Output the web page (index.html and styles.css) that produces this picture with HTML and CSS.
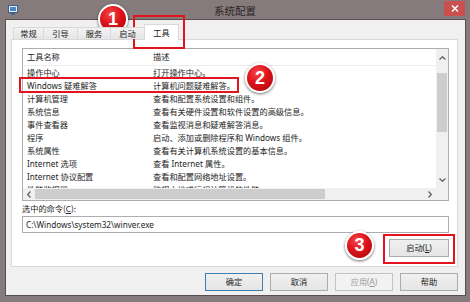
FILE: index.html
```html
<!DOCTYPE html>
<html>
<head>
<meta charset="utf-8">
<title>系统配置</title>
<link rel="stylesheet" href="styles.css">
</head>
<body>
<div class="window">
  <div class="titlebar">
    <svg class="appicon" width="10" height="10" viewBox="0 0 10 10">
      <rect x="0.5" y="0.5" width="9" height="7" fill="#e6eef6" stroke="#3d5f8f"/>
      <rect x="2" y="2" width="6" height="4" fill="#4f86c6"/>
      <rect x="3" y="8" width="4" height="1.6" fill="#3d5f8f"/>
    </svg>
    <div class="title">系统配置</div>
    <div class="close">
      <svg width="8" height="7" viewBox="0 0 8 7"><path d="M1 0.5 L7 6.5 M7 0.5 L1 6.5" stroke="#fff" stroke-width="1.5"/></svg>
    </div>
  </div>
  <div class="client">
    <div class="tabs">
      <div class="tab t1">常规</div>
      <div class="tab t2">引导</div>
      <div class="tab t3">服务</div>
      <div class="tab t4">启动</div>
      <div class="tab t5 active">工具</div>
    </div>
    <div class="panel">
      <div class="listview">
        <div class="lv-main">
          <div class="lv-header"><div class="c1">工具名称</div><div class="c2">描述</div></div>
          <div class="lv-row"><div class="c1">操作中心</div><div class="c2">打开操作中心。</div></div>
          <div class="lv-row"><div class="c1">Windows 疑难解答</div><div class="c2">计算机问题疑难解答。</div></div>
          <div class="lv-row"><div class="c1">计算机管理</div><div class="c2">查看和配置系统设置和组件。</div></div>
          <div class="lv-row"><div class="c1">系统信息</div><div class="c2">查看有关硬件设置和软件设置的高级信息。</div></div>
          <div class="lv-row"><div class="c1">事件查看器</div><div class="c2">查看监视消息和疑难解答消息。</div></div>
          <div class="lv-row"><div class="c1">程序</div><div class="c2">启动、添加或删除程序和 Windows 组件。</div></div>
          <div class="lv-row"><div class="c1">系统属性</div><div class="c2">查看有关计算机系统设置的基本信息。</div></div>
          <div class="lv-row"><div class="c1">Internet 选项</div><div class="c2">查看 Internet 属性。</div></div>
          <div class="lv-row"><div class="c1">Internet 协议配置</div><div class="c2">查看和配置网络地址设置。</div></div>
          <div class="lv-row"><div class="c1">性能监视器</div><div class="c2">监视本地或远程计算机的性能。</div></div>
        </div>
        <div class="vscroll">
          <div class="arrow"><svg width="7" height="4" viewBox="0 0 7 4"><path d="M0.5 3.5 L3.5 0.7 L6.5 3.5" fill="none" stroke="#606060" stroke-width="1.2"/></svg></div>
          <div class="track"><div class="vthumb"></div></div>
          <div class="arrow"><svg width="7" height="4" viewBox="0 0 7 4"><path d="M0.5 0.5 L3.5 3.3 L6.5 0.5" fill="none" stroke="#606060" stroke-width="1.2"/></svg></div>
        </div>
        <div class="hscroll">
          <div class="harrow"><svg width="4" height="7" viewBox="0 0 4 7"><path d="M3.5 0.5 L0.7 3.5 L3.5 6.5" fill="none" stroke="#606060" stroke-width="1.2"/></svg></div>
          <div class="htrack"><div class="hthumb"></div></div>
          <div class="harrow"><svg width="4" height="7" viewBox="0 0 4 7"><path d="M0.5 0.5 L3.3 3.5 L0.5 6.5" fill="none" stroke="#606060" stroke-width="1.2"/></svg></div>
        </div>
        <div class="corner"></div>
      </div>
      <div class="label">选中的命令(<u>C</u>):</div>
      <div class="textbox">C:\Windows\system32\winver.exe</div>
      <div class="launch-row"><button class="btn launch">启动(<u>L</u>)</button></div>
    </div>
    <div class="buttons">
      <button class="btn default">确定</button>
      <button class="btn">取消</button>
      <button class="btn disabled">应用(<u>A</u>)</button>
      <button class="btn">帮助</button>
    </div>
  </div>

  <div class="mark m1"></div>
  <div class="mark m2"></div>
  <div class="mark m3"></div>
  <div class="badge b1">1</div>
  <div class="badge b2">2</div>
  <div class="badge b3">3</div>
</div>
</body>
</html>
```
FILE: styles.css
```css
* { box-sizing: border-box; }
html, body { margin: 0; padding: 0; }
body {
  width: 470px;
  height: 302px;
  overflow: hidden;
  background: #867b7c;
  font-family: "Noto Sans", "Noto Sans CJK SC", sans-serif;
  font-size: 8.2px;
  color: #1e1e1e;
}
.window {
  position: relative;
  width: 470px;
  height: 302px;
  display: flex;
  flex-direction: column;
  background: #867b7c;
}
.titlebar {
  height: 20px;
  display: grid;
  grid-template-columns: 1fr auto 1fr;
  align-items: center;
}
.appicon { margin-left: 8px; margin-top: -1px; }
.title {
  font-family: "Noto Sans CJK SC", sans-serif;
  font-size: 10.5px;
  color: #2b2424;
  margin-top: 1px;
}
.close {
  justify-self: end;
  align-self: start;
  margin-right: 5px;
  margin-top: 1px;
  width: 21px;
  height: 15px;
  background: #c9504e;
  display: flex;
  align-items: center;
  justify-content: center;
}
.client {
  flex: 1;
  margin: 0 5px 7px 6px;
  background: #f0f0f0;
  padding: 4px 7px 4px 5px;
  display: flex;
  flex-direction: column;
  box-shadow: 0 0 0 1px rgba(70, 58, 58, 0.7);
}
.tabs {
  display: flex;
  align-items: flex-end;
  height: 16px;
  margin: 0 0 -1px 2px;
  position: relative;
  z-index: 1;
}
.tab {
  height: 12px;
  margin-bottom: 1px;
  margin-right: -1px;
  border: 1px solid #d9d9d9;
  border-bottom: none;
  background: linear-gradient(#f2f2f2, #e6e6e6);
  text-align: center;
  line-height: 11px;
  font-family: "Noto Sans CJK SC", sans-serif;
  font-size: 8.2px;
  color: #222;
}
.t1 { width: 31px; }
.t2 { width: 35px; }
.t3 { width: 34px; }
.t4 { width: 35px; }
.t5 { width: 35px; }
.tab.active {
  height: 16px;
  margin-bottom: 0;
  background: #fff;
  line-height: 15px;
}
.panel {
  flex: 1;
  background: #fff;
  border: 1px solid #d9d9d9;
  padding: 8px 8px 9px 10px;
  display: flex;
  flex-direction: column;
}
.listview {
  height: 153px;
  border: 1px solid #abadb3;
  display: grid;
  grid-template-columns: 1fr 12px;
  grid-template-rows: 1fr 12px;
}
.lv-main { overflow: hidden; }
.lv-header {
  display: grid;
  grid-template-columns: 126px 1fr;
  height: 17px;
  line-height: 16px;
  border-bottom: 1px solid #ececec;
}
.lv-row {
  display: grid;
  grid-template-columns: 126px 1fr;
  height: 13px;
  line-height: 13px;
}
.c1, .c2 {
  padding-left: 4px;
  white-space: nowrap;
  overflow: hidden;
}
.vscroll {
  background: #f0f0f0;
  display: flex;
  flex-direction: column;
}
.arrow {
  height: 17px;
  display: flex;
  align-items: center;
  justify-content: center;
}
.track { flex: 1; }
.vthumb {
  margin: 7px auto 0;
  width: 10px;
  height: 59px;
  background: #cdcdcd;
}
.hscroll {
  background: #f0f0f0;
  display: flex;
}
.harrow {
  width: 12px;
  display: flex;
  align-items: center;
  justify-content: center;
}
.htrack { flex: 1; display: flex; align-items: center; }
.hthumb {
  width: 290px;
  height: 10px;
  background: #cdcdcd;
}
.corner { background: #f0f0f0; }
.label {
  height: 14px;
  line-height: 15px;
  font-family: "Noto Sans CJK SC", sans-serif;
}
.textbox {
  margin-top: 1px;
  height: 17px;
  border: 1px solid #abadb3;
  padding-left: 3px;
  line-height: 15px;
}
.launch-row {
  display: flex;
  justify-content: flex-end;
  margin-top: 6px;
}
.btn {
  width: 58px;
  height: 18px;
  padding: 0;
  border: 1px solid #acacac;
  background: linear-gradient(#f0f0f0, #e5e5e5);
  font-family: "Noto Sans", "Noto Sans CJK SC", sans-serif;
  font-size: 8.2px;
  color: #1e1e1e;
  line-height: 16px;
}
.btn.launch { width: 60px; }
.btn.default { border-color: #3c7fb1; }
.btn.disabled { color: #9a9a9a; border-color: #c4c4c4; background: #f2f2f2; }
.buttons {
  display: flex;
  justify-content: flex-end;
  gap: 7px;
  margin-top: 6px;
}
.mark {
  position: absolute;
  border: 2px solid #e2141d;
}
.m1 { left: 133px; top: 15px; width: 52px; height: 34px; }
.m2 { left: 19px; top: 77px; width: 220px; height: 16px; }
.m3 { left: 383px; top: 234px; width: 72px; height: 30px; }
.badge {
  position: absolute;
  width: 30px;
  height: 30px;
  border-radius: 50%;
  border: 2.5px solid #fff;
  background: radial-gradient(circle at 40% 30%, #f5474a 0%, #dd1219 45%, #a8060c 100%);
  box-shadow: 0 1px 3px rgba(0, 0, 0, 0.6);
  color: #fff;
  font-family: "Liberation Sans", sans-serif;
  font-weight: bold;
  font-size: 18px;
  display: flex;
  align-items: center;
  justify-content: center;
}
.b1 { left: 98px; top: 4px; }
.b2 { left: 245px; top: 63px; }
.b3 { left: 345px; top: 231px; width: 29px; height: 29px; }
```
